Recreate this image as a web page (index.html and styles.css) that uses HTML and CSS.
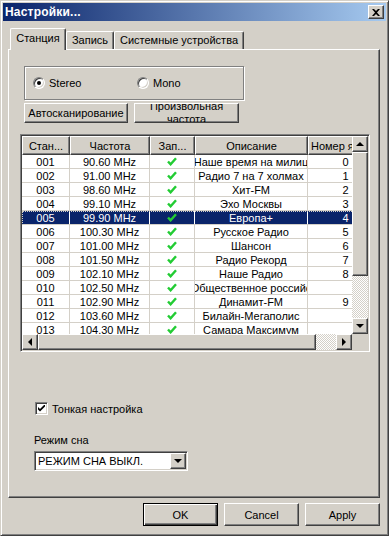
FILE: index.html
```html
<!DOCTYPE html>
<html lang="ru">
<head>
    <meta charset="UTF-8">
    <title>Настройки...</title>
    <link rel="stylesheet" href="styles.css">
</head>
<body>
    <div class="window">
        <div class="titlebar">
            <span class="title">Настройки...</span>
            <div class="close raised">
                <svg width="8" height="7" viewBox="0 0 8 7"><path d="M0 0h2l2 2 2-2h2L5 3.5 8 7H6L4 5 2 7H0l3-3.5z" fill="#000"/></svg>
            </div>
        </div>

        <div class="body">
            <div class="tabs">
                <div class="tab active tab-station">Станция</div>
                <div class="tab tab-rec">Запись</div>
                <div class="tab tab-dev">Системные устройства</div>
            </div>

            <div class="panel">
                <div class="group">
                    <label class="radio first"><span class="radio-box checked"></span>Stereo</label>
                    <label class="radio"><span class="radio-box"></span>Mono</label>
                </div>

                <div class="btn-row">
                    <div class="btn raised btn-scan">Автосканирование</div>
                    <div class="btn raised btn-freq"><span>Произвольная частота</span></div>
                </div>

                <div class="listview">
                    <div class="lv-main">
                        <div class="lv-view">
                            <div class="lv-head">
                                <div class="lv-th">Стан...</div>
                                <div class="lv-th">Частота</div>
                                <div class="lv-th">Зап...</div>
                                <div class="lv-th">Описание</div>
                                <div class="lv-th">Номер ярлыка</div>
                            </div>
                            <div id="rows"></div>
                        </div>
                        <div class="vscroll">
                            <div class="sbtn raised"><span class="arrow up"></span></div>
                            <div class="thumb raised v"></div>
                            <div class="track"></div>
                            <div class="sbtn raised"><span class="arrow down"></span></div>
                        </div>
                    </div>
                    <div class="hscroll">
                        <div class="sbtn raised"><span class="arrow left"></span></div>
                        <div class="thumb raised h"></div>
                        <div class="track"></div>
                        <div class="sbtn raised"><span class="arrow right"></span></div>
                        <div class="corner"></div>
                    </div>
                </div>

                <label class="check">
                    <span class="check-box">
                        <svg width="7" height="7" viewBox="0 0 7 7"><path d="M0 2l2 2 5-5v2.6L2 6.6 0 4.6z" fill="#000"/></svg>
                    </span>
                    Тонкая настройка
                </label>

                <div class="sleep-label">Режим сна</div>
                <div class="combo">
                    <span class="combo-text">РЕЖИМ СНА ВЫКЛ.</span>
                    <div class="sbtn raised"><span class="arrow down"></span></div>
                </div>
            </div>

            <div class="footer">
                <div class="btn raised default">OK</div>
                <div class="btn raised">Cancel</div>
                <div class="btn raised">Apply</div>
            </div>
        </div>
    </div>

    <script>
        const stations = [
            ['001', '90.60 MHz', 'Наше время на милиц', '0'],
            ['002', '91.00 MHz', 'Радио 7 на 7 холмах', '1'],
            ['003', '98.60 MHz', 'Хит-FM', '2'],
            ['004', '99.10 MHz', 'Эхо Москвы', '3'],
            ['005', '99.90 MHz', 'Европа+', '4'],
            ['006', '100.30 MHz', 'Русское Радио', '5'],
            ['007', '101.00 MHz', 'Шансон', '6'],
            ['008', '101.50 MHz', 'Радио Рекорд', '7'],
            ['009', '102.10 MHz', 'Наше Радио', '8'],
            ['010', '102.50 MHz', 'Общественное российс', ''],
            ['011', '102.90 MHz', 'Динамит-FM', '9'],
            ['012', '103.60 MHz', 'Билайн-Мегаполис', ''],
            ['013', '104.30 MHz', 'Самара Максимум', '']
        ];

        const tick = '<svg width="10" height="9" viewBox="0 0 10 9"><path d="M1 4.5l2.6 2.8L9 1.2" fill="none" stroke="#22cc33" stroke-width="2.4"/></svg>';

        const rows = document.getElementById('rows');
        stations.forEach((s, i) => {
            const row = document.createElement('div');
            row.className = 'lv-row' + (i === 4 ? ' selected' : '');
            row.innerHTML =
                `<div class="lv-td"><span>${s[0]}</span></div>` +
                `<div class="lv-td"><span>${s[1]}</span></div>` +
                `<div class="lv-td">${tick}</div>` +
                `<div class="lv-td"><span>${s[2]}</span></div>` +
                `<div class="lv-td num"><span>${s[3]}</span></div>`;
            rows.appendChild(row);
        });
    </script>
</body>
</html>
```

FILE: styles.css
```css
* {
    box-sizing: border-box;
}
body {
    margin: 0;
    font-family: "Liberation Sans", Arial, sans-serif;
    font-size: 11px;
    color: #000;
    background: #d4d0c8;
}
.window {
    width: 389px;
    height: 536px;
    border: 1px solid;
    border-color: #d4d0c8 #404040 #404040 #d4d0c8;
    box-shadow: inset 1px 1px #fff, inset -1px -1px #808080;
    padding: 2px;
    background: #d4d0c8;
}
.raised {
    background: #d4d0c8;
    border: 1px solid;
    border-color: #fff #404040 #404040 #fff;
    box-shadow: inset -1px -1px #808080;
}

/* title bar */
.titlebar {
    height: 18px;
    display: flex;
    align-items: center;
    justify-content: space-between;
    padding: 0 2px 0 2px;
    background: linear-gradient(to right, #0a246a, #a6caf0);
}
.title {
    color: #fff;
    font-weight: bold;
    font-size: 12px;
    letter-spacing: 0.2px;
}
.close {
    width: 16px;
    height: 14px;
    display: flex;
    align-items: center;
    justify-content: center;
}

/* body */
.body {
    padding: 7px 5px 0 5px;
}
.tabs {
    display: flex;
    align-items: flex-end;
    height: 21px;
    padding-left: 2px;
    position: relative;
    z-index: 1;
}
.tab {
    height: 18px;
    padding-top: 2px;
    text-align: center;
    white-space: nowrap;
    border-left: 1px solid #fff;
    border-top: 1px solid #fff;
    border-right: 1px solid #404040;
    box-shadow: inset -1px 0 #808080;
    border-top-left-radius: 2px;
    border-top-right-radius: 2px;
    background: #d4d0c8;
}
.tab.active {
    height: 22px;
    margin-bottom: -1px;
    padding-top: 3px;
}
.tab-station {
    width: 56px;
}
.tab-rec {
    width: 48px;
}
.tab-dev {
    width: 130px;
}
.panel {
    width: 372px;
    height: 449px;
    border: 1px solid;
    border-color: #fff #404040 #404040 #fff;
    box-shadow: inset -1px -1px #808080;
}

/* radio group */
.group {
    margin: 16px 0 0 15px;
    width: 220px;
    height: 34px;
    border: 1px solid #808080;
    box-shadow: inset 1px 1px #fff, 1px 1px #fff;
    display: flex;
    align-items: center;
    padding-left: 8px;
}
.radio {
    display: flex;
    align-items: center;
    gap: 4px;
}
.radio.first {
    width: 104px;
}
.radio-box {
    width: 12px;
    height: 12px;
    border-radius: 50%;
    background: #fff;
    border: 1px solid;
    border-color: #808080 #fff #fff #808080;
    box-shadow: inset 1px 1px #404040, inset -1px -1px #d4d0c8;
    display: flex;
    align-items: center;
    justify-content: center;
}
.radio-box.checked::after {
    content: "";
    width: 4px;
    height: 4px;
    border-radius: 50%;
    background: #000;
}

/* buttons */
.btn-row {
    display: flex;
    gap: 6px;
    margin: 3px 0 0 15px;
}
.btn {
    height: 20px;
    display: flex;
    align-items: center;
    justify-content: center;
    overflow: hidden;
}
.btn-scan {
    width: 104px;
}
.btn-freq {
    width: 105px;
    line-height: 13px;
    text-align: center;
}
.btn-freq span {
    width: 80px;
}

/* list view */
.listview {
    margin: 11px 0 0 11px;
    width: 350px;
    height: 218px;
    border: 1px solid;
    border-color: #808080 #fff #fff #808080;
    box-shadow: inset 1px 1px #404040, inset -1px -1px #d4d0c8;
    padding: 1px;
    background: #fff;
}
.lv-main {
    display: flex;
    height: 198px;
}
.lv-view {
    width: 330px;
    overflow: hidden;
}
.lv-head,
.lv-row {
    display: grid;
    grid-template-columns: 48px 80px 45px 113px 80px;
    width: 366px;
}
.lv-head {
    height: 19px;
}
.lv-th {
    background: #d4d0c8;
    border: 1px solid;
    border-color: #fff #404040 #404040 #fff;
    box-shadow: inset -1px -1px #808080;
    display: flex;
    align-items: center;
    justify-content: center;
    white-space: nowrap;
    overflow: hidden;
}
.lv-row {
    height: 14px;
    border-bottom: 1px solid #d4d0c8;
}
.lv-td {
    border-right: 1px solid #d4d0c8;
    display: flex;
    align-items: center;
    justify-content: center;
    white-space: nowrap;
    overflow: hidden;
}
.lv-td.num {
    padding-right: 4px;
}
.lv-row.selected {
    background: #0a246a;
    color: #fff;
    outline: 1px dotted #d4d0c8;
    outline-offset: -1px;
}
.lv-row.selected .lv-td {
    border-right-color: #fff;
}

/* scrollbars */
.vscroll {
    width: 16px;
    display: flex;
    flex-direction: column;
}
.sbtn {
    width: 16px;
    height: 16px;
    flex: none;
    display: flex;
    align-items: center;
    justify-content: center;
}
.thumb.v {
    height: 124px;
    flex: none;
}
.track {
    flex: 1;
    background: repeating-conic-gradient(#fff 0 25%, #d4d0c8 0 50%) 0 0 / 2px 2px;
}
.hscroll {
    display: flex;
    height: 16px;
}
.thumb.h {
    width: 278px;
    flex: none;
}
.corner {
    width: 16px;
    background: #d4d0c8;
}
.arrow {
    width: 0;
    height: 0;
    border: 4px solid transparent;
}
.arrow.up {
    border-bottom-color: #000;
    border-top-width: 0;
    margin-top: -1px;
}
.arrow.down {
    border-top-color: #000;
    border-bottom-width: 0;
}
.arrow.left {
    border-right-color: #000;
    border-left-width: 0;
}
.arrow.right {
    border-left-color: #000;
    border-right-width: 0;
}

/* checkbox */
.check {
    display: flex;
    align-items: center;
    gap: 4px;
    margin: 50px 0 0 26px;
    height: 13px;
}
.check-box {
    width: 13px;
    height: 13px;
    background: #fff;
    border: 1px solid;
    border-color: #808080 #fff #fff #808080;
    box-shadow: inset 1px 1px #404040, inset -1px -1px #d4d0c8;
    display: flex;
    align-items: center;
    justify-content: center;
}

/* sleep mode */
.sleep-label {
    margin: 19px 0 0 25px;
    height: 13px;
    line-height: 13px;
}
.combo {
    margin: 4px 0 0 25px;
    width: 154px;
    height: 20px;
    border: 1px solid;
    border-color: #808080 #fff #fff #808080;
    box-shadow: inset 1px 1px #404040, inset -1px -1px #d4d0c8;
    padding: 1px;
    background: #fff;
    display: flex;
    align-items: center;
    justify-content: space-between;
}
.combo-text {
    padding-left: 2px;
}

/* footer */
.footer {
    display: flex;
    justify-content: flex-end;
    gap: 6px;
    margin-top: 5px;
    padding-right: 1px;
}
.footer .btn {
    width: 75px;
    height: 23px;
}
.footer .btn.default {
    border: 1px solid #000;
    box-shadow: inset 1px 1px #fff, inset -1px -1px #404040, inset -2px -2px #808080;
}
```
